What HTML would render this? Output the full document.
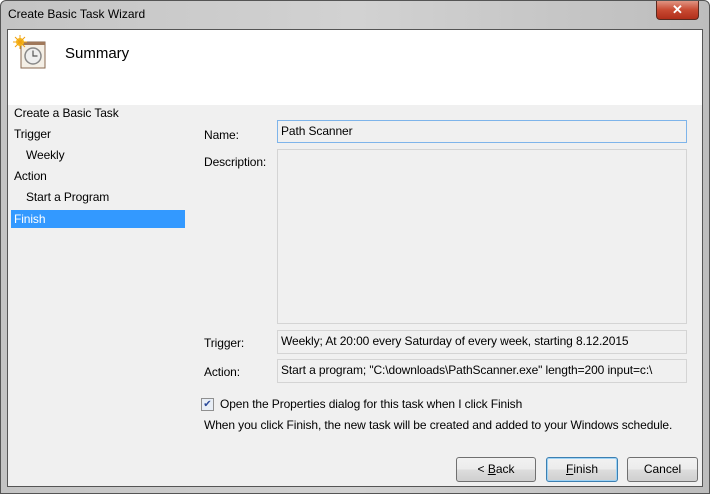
<!DOCTYPE html>
<html><head><style>
*{margin:0;padding:0;box-sizing:border-box}
body{width:710px;height:494px;overflow:hidden;font-family:"Liberation Sans",sans-serif;font-size:12px;color:#000;background:#fff}
.frame{position:absolute;left:0;top:0;width:710px;height:494px;background:linear-gradient(90deg,#c4c4c4,#d2d2d2 50%,#bdbdbd);border:1px solid #555;border-radius:6px 6px 0 0}
.title{position:absolute;left:8px;top:7px;font-size:12px;color:#000}
.close{position:absolute;left:656px;top:1px;width:43px;height:19px;border:1px solid #5a2a20;border-top:none;border-radius:0 0 4px 4px;background:linear-gradient(#e09482,#c84a32 50%,#b02e1a);color:#fff;text-align:center;font-weight:bold;font-size:13px;line-height:18px}
.client{position:absolute;left:7px;top:29px;width:696px;height:458px;background:#f0f0f0;border:1px solid #555}
.head{position:absolute;left:0;top:0;width:694px;height:75px;background:#fff}
.sum{position:absolute;left:57px;top:15px;font-size:15px}
.nav,.lbl{position:absolute;font-size:12px;letter-spacing:-0.1px}
.box{position:absolute;left:269px;width:410px;background:#f0f0f0;border:1px solid #d4d4d4;padding:3px 3px;font-size:12px;letter-spacing:-0.1px}
.btn{position:absolute;top:427px;height:25px;border:1px solid #707070;border-radius:3px;background:linear-gradient(#f2f2f2,#ebebeb 50%,#dddddd 51%,#cfcfcf);text-align:center;line-height:23px}
</style></head><body>
<div class="frame"></div>
<div class="title">Create Basic Task Wizard</div>
<div class="close">✕</div>
<div class="client">
 <div class="head">
  <svg style="position:absolute;left:5px;top:5px" width="34" height="36" viewBox="0 0 34 36">
   <rect x="8" y="7" width="24" height="26" fill="#f4efe6" stroke="#8a6a50"/>
   <rect x="8" y="7" width="24" height="3" fill="#a0785a"/>
   <circle cx="20" cy="21" r="8" fill="#eee" stroke="#888" stroke-width="1.5"/>
   <path d="M20 15.5v5.5h4.5" stroke="#555" fill="none" stroke-width="1.2"/>
   <circle cx="7" cy="7" r="4" fill="#f8c020"/>
   <path d="M7 0v14M0 7h14M2 2l10 10M12 2l-10 10" stroke="#f0a010" stroke-width="1"/>
  </svg>
  <div class="sum">Summary</div>
 </div>
 <div class="nav" style="left:6px;top:76px">Create a Basic Task</div>
 <div class="nav" style="left:6px;top:97px">Trigger</div>
 <div class="nav" style="left:18px;top:118px">Weekly</div>
 <div class="nav" style="left:6px;top:139px">Action</div>
 <div class="nav" style="left:18px;top:160px">Start a Program</div>
 <div class="nav" style="left:3px;top:180px;width:174px;height:18px;background:#3399ff;color:#fff;padding:2px 3px">Finish</div>
 <div class="lbl" style="left:196px;top:98px">Name:</div>
 <div class="box" style="top:90px;height:23px;border-color:#7eb4ea;color:#000">Path Scanner</div>
 <div class="lbl" style="left:196px;top:125px">Description:</div>
 <div class="box" style="top:119px;height:175px"></div>
 <div class="lbl" style="left:196px;top:306px">Trigger:</div>
 <div class="box" style="top:300px;height:24px">Weekly; At 20:00 every Saturday of every week, starting 8.12.2015</div>
 <div class="lbl" style="left:196px;top:335px">Action:</div>
 <div class="box" style="top:329px;height:24px">Start a program; "C:\downloads\PathScanner.exe" length=200 input=c:\</div>
 <div style="position:absolute;left:193px;top:368px;width:13px;height:13px;border:1px solid #8f8f8f;background:#e8eef6;color:#2a4a9a;font-size:10px;line-height:11px;text-align:center">✔</div>
 <div class="lbl" style="left:212px;top:367px">Open the Properties dialog for this task when I click Finish</div>
 <div class="lbl" style="left:196px;top:388px">When you click Finish, the new task will be created and added to your Windows schedule.</div>
 <div class="btn" style="left:448px;width:80px">&lt; <u>B</u>ack</div>
 <div class="btn" style="left:538px;width:72px;border-color:#3c7fb1;box-shadow:inset 0 0 0 1px #9ed3f5"><u>F</u>inish</div>
 <div class="btn" style="left:619px;width:71px">Cancel</div>
</div>
</body></html>
